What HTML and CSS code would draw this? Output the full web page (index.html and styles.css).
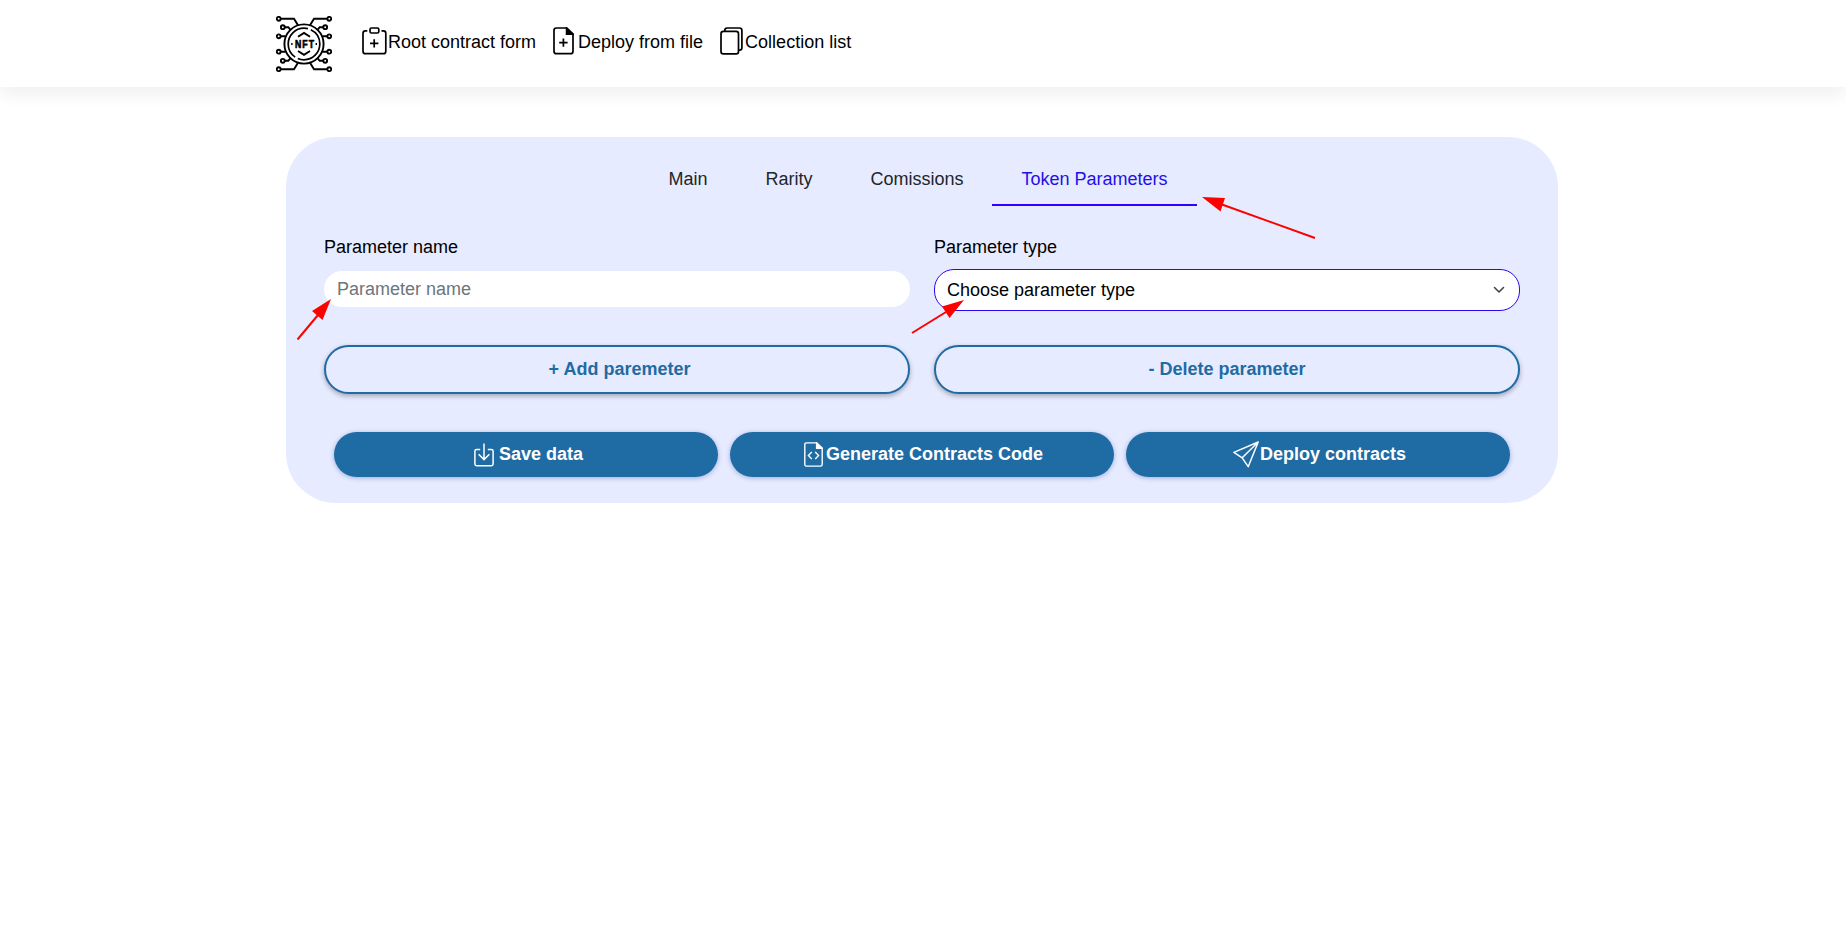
FILE: index.html
```
<!DOCTYPE html>
<html lang="en">
<head>
<meta charset="utf-8">
<title>NFT contract form</title>
<link rel="stylesheet" href="styles.css">
</head>
<body>
<header class="header">
  <svg class="logo" viewBox="0 0 56 56" fill="none" stroke="#000" stroke-width="1.9">
    <circle cx="28" cy="28" r="19.6"/>
    <circle cx="28" cy="28" r="15.8" stroke-width="1.7" stroke-dasharray="31 3 44 3 18.300 0"/>
    <path d="M22 20.700l6-3.800 6 3.800M22 35l6 3.800 6-3.800"/>
    <g id="side">
      <circle cx="2.7" cy="2.8" r="1.9"/><circle cx="6.8" cy="11.2" r="1.9"/><circle cx="2.7" cy="20.3" r="1.9"/>
      <circle cx="2.7" cy="35.7" r="1.9"/><circle cx="6.8" cy="44.8" r="1.9"/><circle cx="2.7" cy="53.2" r="1.9"/>
      <path d="M4.6 2.8H18l4 6.5M8.7 11.2h3.600l2.400 3M4.6 20.3h5M4.6 35.7h5M8.7 44.8h3.600l2.400-3M4.6 53.2H18l4-6.5"/>
    </g>
    <use href="#side" transform="matrix(-1 0 0 1 56 0)"/>
    <path d="M15.2 28h1.400M39.6 28h1.400"/>
    <g transform="translate(28.300 32) scale(.76 1)"><text class="logo-text" text-anchor="middle" x="1">NFT</text></g>
  </svg>
  <nav class="nav">
    <a class="nav-link link-root"><svg width="25" height="28" viewBox="0 0 25 28" fill="none" stroke="#000" stroke-width="1.7"><path d="M5.3 3.8H3.4Q1 3.8 1 6.2v18Q1 26.7 3.4 26.7h18q2.4 0 2.4-2.5v-18q0-2.4-2.4-2.4h-1.9M12.2 12.2v8.4M8 16.4h8.4"/><rect x="8" y="1" width="8.8" height="5" rx="1.4"/></svg>Root contract form</a>
    <a class="nav-link link-file"><svg width="21" height="28" viewBox="0 0 21 28" fill="none" stroke="#000" stroke-width="1.7"><path d="M13.6 1H3.4Q1 1 1 3.4v20.8q0 2.5 2.4 2.5h14.2q2.4 0 2.4-2.5V7.2zM10.4 11.4v8.4M6.2 15.6h8.4"/><path d="M13.6 1v6.2H20z" fill="#000"/></svg>Deploy from file</a>
    <a class="nav-link"><svg width="23" height="28" viewBox="0 0 23 28" fill="none" stroke="#000" stroke-width="1.7"><rect x="1" y="4.4" width="17.5" height="22.4" rx="2.4"/><path d="M4.8 4.2V3.4Q4.8 1 7.2 1h12.2q2.5 0 2.5 2.4v17.4q0 2.4-2.5 2.4h-.9"/></svg>Collection list</a>
  </nav>
</header>

<main class="card">
  <div class="tabs">
    <a class="tab">Main</a><a class="tab">Rarity</a><a class="tab">Comissions</a><a class="tab tab-active">Token Parameters</a>
  </div>
  <div class="fields">
    <div class="field">
      <label class="label">Parameter name</label>
      <div class="slot"><input class="input" type="text" placeholder="Parameter name"></div>
    </div>
    <div class="field">
      <label class="label">Parameter type</label>
      <div class="select">Choose parameter type
        <svg width="12" height="8" viewBox="0 0 12 8" fill="none" stroke="#444" stroke-width="1.6" stroke-linecap="round" stroke-linejoin="round"><path d="M1.5 1.5L6 6l4.5-4.5"/></svg>
      </div>
    </div>
    <button class="btn btn-outline btn-add">+ Add paremeter</button>
    <button class="btn btn-outline">- Delete parameter</button>
  </div>
  <div class="actions">
    <button class="btn btn-solid btn-save"><svg class="icon-save" width="20" height="24" viewBox="0 0 20 24" fill="none" stroke="#fff" stroke-width="1.5"><path d="M6.2 6.4H2.6Q.9 6.4.9 8v13q0 1.7 1.7 1.7h14.8q1.7 0 1.7-1.7V8q0-1.6-1.7-1.6h-3.6M10 .4v16M4.6 11.2L10 16.6l5.4-5.4"/></svg>Save data</button>
    <button class="btn btn-solid"><svg class="icon-code" width="19" height="25" viewBox="0 0 19 25" fill="none" stroke="#fff" stroke-width="1.4"><path d="M12.6.9H2.4Q.8.9.8 2.5v20q0 1.6 1.600 1.6h14.2q1.6 0 1.6-1.6V6.2zM7.800 10l-3.400 3.500L7.800 17M11.200 10l3.400 3.500-3.400 3.500"/><path d="M12.6.9v5.3h5.6z" fill="#fff"/></svg>Generate Contracts Code</button>
    <button class="btn btn-solid"><svg class="icon-send" width="26" height="27" viewBox="0 0 26 27" fill="none" stroke="#fff" stroke-width="1.5" stroke-linejoin="round"><path d="M25.2 1L.9 11.400l8.300 5.400 6 8.900zM25.2 1L9.2 16.8"/></svg>Deploy contracts</button>
  </div>
</main>

<svg class="arrows" width="1846" height="948" viewBox="0 0 1846 948" fill="#f00" stroke="#f00" stroke-width="2">
  <path d="M1315 238L1222 204.500M297.500 339.500L318 315M912 333L946 312"/>
  <path stroke="none" d="M1202 197l23 1-4.500 13.500zM331 299l-19 12 10.500 9zM964 300l-22 6.500 7.500 11.500z"/>
</svg>
</body>
</html>
```
FILE: styles.css
```
* { box-sizing: border-box; }
body {
  margin: 0;
  background: #fff;
  color: #000;
  font: 18px/27px "Liberation Sans", Arial, sans-serif;
}
.header {
  display: flex;
  align-items: flex-start;
  height: 87px;
  padding: 16px 0 0 276px;
  box-shadow: 0 8px 16px rgba(0, 0, 0, .06);
}
.logo { width: 56px; height: 56px; }
.logo-text { font: bold 11.5px "Liberation Sans", Arial, sans-serif; letter-spacing: 1.4px; fill: #000; stroke: #000; stroke-width: .7px; }
.nav { display: flex; gap: 17px; margin: 11px 0 0 30px; }
.nav-link { display: flex; gap: 2px; height: 28px; line-height: 30px; white-space: nowrap; }
.nav-link svg { flex: none; }
.link-root { gap: 1px; }
.link-file { gap: 4px; }
.card {
  width: 1272px;
  height: 366px;
  margin: 50px 0 0 286px;
  padding: 16px 38px 0;
  border-radius: 50px;
  background: #e7ebff;
}
.tabs { display: flex; justify-content: center; margin-right: 8px; }
.tab { height: 53px; padding: 13px 29px 0; color: #212529; border-bottom: 2px solid transparent; }
.tab-active { color: #2410e6; border-color: #30f; }
.fields { display: grid; grid-template-columns: 586px 586px; column-gap: 24px; row-gap: 34px; padding-top: 28px; }
.field { display: flex; flex-direction: column; gap: 8px; }
.label { height: 27px; }
.slot { height: 42px; padding-top: 2px; }
.input {
  display: block;
  width: 100%;
  height: 36px;
  padding: 0 13px;
  border: 0;
  border-radius: 20px;
  background: #fff;
  font: inherit;
}
.input::placeholder { color: #6c757d; opacity: 1; }
.select {
  display: flex;
  align-items: center;
  justify-content: space-between;
  height: 42px;
  padding: 0 14px 0 12px;
  border: 1px solid #2a08f0;
  border-radius: 20px;
  background: #fff;
}
.btn {
  display: flex;
  align-items: center;
  justify-content: center;
  padding: 0;
  font: bold 18px/27px "Liberation Sans", Arial, sans-serif;
}
.btn-outline {
  height: 49px;
  border: 2px solid #1f6ba3;
  border-radius: 25px;
  background: #e7ebff;
  color: #1f6ba3;
  box-shadow: 0 2px 5px rgba(0, 0, 0, .3);
}
.btn-add { padding-left: 5px; }
.actions { display: grid; grid-template-columns: repeat(3, 384px); gap: 12px; padding: 38px 10px 0; }
.btn-solid {
  height: 45px;
  padding-left: 3px;
  border: 0;
  border-radius: 23px;
  background: #1f6ba3;
  color: #fff;
  box-shadow: 0 1px 5px rgba(31, 80, 163, .4);
}
.btn-save { padding-left: 5px; }
.icon-save { margin-right: 5px; }
.icon-code { margin-right: 3px; }
.icon-send { margin-right: 1px; }
.arrows { position: absolute; left: 0; top: 0; pointer-events: none; }
```
